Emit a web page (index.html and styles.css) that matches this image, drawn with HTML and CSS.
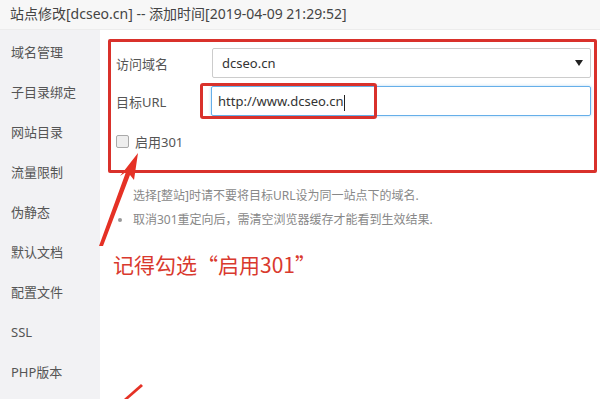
FILE: index.html
```html
<!DOCTYPE html>
<html lang="zh-CN">
<head>
<meta charset="utf-8">
<link rel="stylesheet" href="styles.css">
</head>
<body>
<div class="header">站点修改[dcseo.cn] -- 添加时间[2019-04-09 21:29:52]</div>
<div class="layout">
  <nav class="sidebar">
    <div class="item">域名管理</div>
    <div class="item">子目录绑定</div>
    <div class="item">网站目录</div>
    <div class="item">流量限制</div>
    <div class="item">伪静态</div>
    <div class="item">默认文档</div>
    <div class="item">配置文件</div>
    <div class="item">SSL</div>
    <div class="item">PHP版本</div>
  </nav>
  <main class="main">
    <div class="panel">
      <div class="row">
        <span class="label">访问域名</span>
        <div class="select">dcseo.cn<span class="caret"></span></div>
      </div>
      <div class="row">
        <span class="label">目标URL</span>
        <div class="input">http://www.dcseo.cn<span class="cursor"></span></div>
        <div class="highlight"></div>
      </div>
      <div class="check-row">
        <span class="checkbox"></span>
        <span class="check-label">启用301</span>
      </div>
    </div>
    <ul class="help">
      <li class="nobullet">选择[整站]时请不要将目标URL设为同一站点下的域名.</li>
      <li>取消301重定向后，需清空浏览器缓存才能看到生效结果.</li>
    </ul>
    <div class="note">记得勾选“启用301”</div>
  </main>
</div>
<svg class="arrows" width="600" height="399" viewBox="0 0 600 399">
  <path d="M99 246 L126 172 L120 176 L138 153 L134 180 L130 175 L103 246 Z" fill="#e53125"/>
  <path d="M124 399 L141 384 L143 386 L128 399 Z" fill="#e53125"/>
</svg>
</body>
</html>
```

FILE: styles.css
```css
html, body {
  margin: 0;
  padding: 0;
  width: 600px;
  height: 399px;
  overflow: hidden;
  background: #fff;
  font-family: "Noto Sans", "Noto Sans CJK SC", sans-serif;
  color: #333;
}
body { position: relative; }

.header {
  height: 30px;
  line-height: 27px;
  padding-left: 10px;
  font-size: 14px;
  color: #444;
  background: #f7f7f7;
  border-bottom: 1px solid #ececec;
  box-sizing: border-box;
}

.layout {
  display: flex;
  height: 369px;
}

.sidebar {
  width: 100px;
  background: #f2f2f4;
  padding-top: 12px;
  box-sizing: border-box;
}
.sidebar .item {
  height: 40px;
  line-height: 20px;
  padding-left: 11px;
  font-size: 13px;
  color: #555;
}

.main {
  flex: 1;
  padding: 9px 3px 0 8px;
  box-sizing: border-box;
}

.panel {
  border: 3px solid #d9312b;
  height: 134px;
  box-sizing: border-box;
  padding: 6px 3px 0 5px;
  border-radius: 2px;
}

.row {
  display: flex;
  align-items: center;
  height: 30px;
  margin-bottom: 8px;
  position: relative;
}
.label {
  width: 96px;
  font-size: 13px;
  color: #555;
}
.select, .input {
  flex: 1;
  height: 30px;
  box-sizing: border-box;
  border: 1px solid #ccc;
  border-radius: 2px;
  font-size: 13px;
  line-height: 28px;
  padding-left: 9px;
  color: #333;
  position: relative;
}
.select { margin-left: 0; }
.input {
  margin-left: -1px;
  border-color: #66afe9;
  box-shadow: 0 0 3px rgba(102,175,233,0.5);
  padding-left: 6px;
}
.cursor {
  display: inline-block;
  width: 1px;
  height: 16px;
  background: #222;
  vertical-align: middle;
}
.caret {
  position: absolute;
  right: 7px;
  top: 11px;
  width: 0;
  height: 0;
  border-left: 4px solid transparent;
  border-right: 4px solid transparent;
  border-top: 6px solid #222;
}
.highlight {
  position: absolute;
  left: 84px;
  top: -3px;
  width: 177px;
  height: 36px;
  box-sizing: border-box;
  border: 3px solid #d9312b;
  border-radius: 3px;
}

.check-row {
  display: flex;
  align-items: center;
  margin-top: 16px;
}
.checkbox {
  width: 11px;
  height: 11px;
  border: 1px solid #aaa;
  border-radius: 2px;
  background: #eee;
  margin-right: 6px;
}
.check-label {
  font-size: 13px;
  color: #555;
}

.help {
  margin: 13px 0 0 0;
  padding: 0 0 0 25px;
  font-size: 12px;
  color: #888;
  list-style: disc;
}
.help li {
  height: 24px;
  line-height: 20px;
}
.help li::marker { color: #999; }
.help li.nobullet { list-style: none; }

.note {
  margin-top: 15px;
  margin-left: 5px;
  font-family: "Noto Sans CJK SC", sans-serif;
  font-size: 21px;
  color: #d9392e;
}

.arrows {
  position: absolute;
  left: 0;
  top: 0;
  pointer-events: none;
}
```
